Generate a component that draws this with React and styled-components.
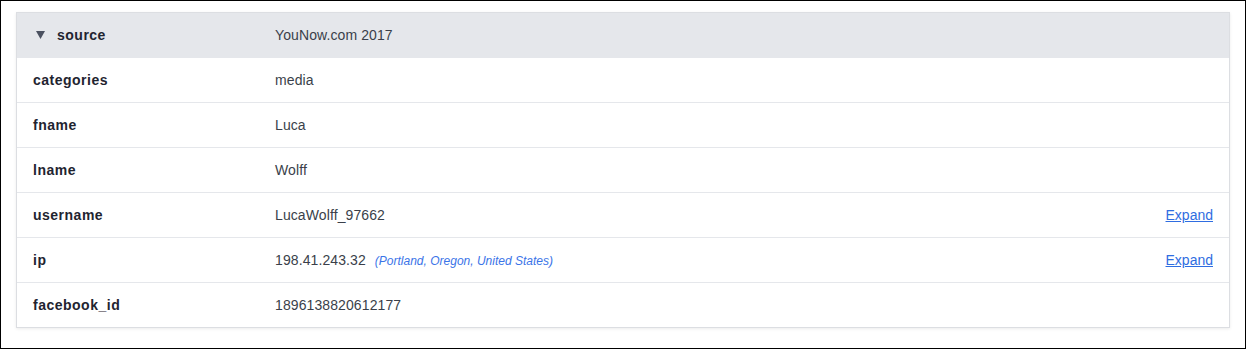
import React from 'react';
import styled, { createGlobalStyle } from 'styled-components';

const GlobalStyle = createGlobalStyle`
  html, body {
    margin: 0;
    padding: 0;
    background: #fff;
  }
  body {
    font-family: "Liberation Sans", Arial, sans-serif;
  }
`;

const Frame = styled.div`
  box-sizing: border-box;
  width: 1246px;
  height: 349px;
  border: 1px solid #000;
  padding: 11px 15px;
`;

const Card = styled.div`
  border: 1px solid #dcdee2;
  box-shadow: 0 1px 3px rgba(0, 0, 0, 0.08);
  background: #fff;
`;

const Row = styled.div`
  display: grid;
  grid-template-columns: 242px 1fr auto;
  align-items: center;
  height: ${(props) => (props.head ? '44px' : '45px')};
  box-sizing: border-box;
  padding: 0 16px;
  background: ${(props) => (props.head ? '#e5e7eb' : '#fff')};
  border-top: ${(props) => (props.head ? 'none' : '1px solid #e5e7eb')};
`;

const Key = styled.div`
  display: flex;
  align-items: center;
  font-size: 14px;
  font-weight: 700;
  letter-spacing: 0.5px;
  color: #1f2430;
`;

const Caret = styled.svg`
  width: 9px;
  height: 8px;
  margin: 0 12px 0 3px;
  fill: #4b5160;
`;

const Value = styled.div`
  font-size: 14px;
  letter-spacing: 0.1px;
  color: #3a3f4a;
  display: flex;
  align-items: baseline;
`;

const Location = styled.span`
  margin-left: 9px;
  font-size: 12px;
  font-style: italic;
  letter-spacing: 0;
  color: #3b74e8;
`;

const ExpandLink = styled.a`
  font-size: 14px;
  color: #2f6de1;
  text-decoration: underline;
  cursor: pointer;
`;

const rows = [
  { key: 'categories', value: 'media' },
  { key: 'fname', value: 'Luca' },
  { key: 'lname', value: 'Wolff' },
  { key: 'username', value: 'LucaWolff_97662', expand: true },
  { key: 'ip', value: '198.41.243.32', location: '(Portland, Oregon, United States)', expand: true },
  { key: 'facebook_id', value: '1896138820612177' },
];

const App = () => {
  return (
    <Frame>
      <GlobalStyle />
      <Card>
        <Row head>
          <Key>
            <Caret viewBox="0 0 9 8">
              <path d="M0 0 H9 L4.5 8 Z" />
            </Caret>
            source
          </Key>
          <Value>YouNow.com 2017</Value>
          <span />
        </Row>
        {rows.map((row) => (
          <Row key={row.key}>
            <Key>{row.key}</Key>
            <Value>
              {row.value}
              {row.location && <Location>{row.location}</Location>}
            </Value>
            {row.expand ? <ExpandLink>Expand</ExpandLink> : <span />}
          </Row>
        ))}
      </Card>
    </Frame>
  );
};

export default App;
